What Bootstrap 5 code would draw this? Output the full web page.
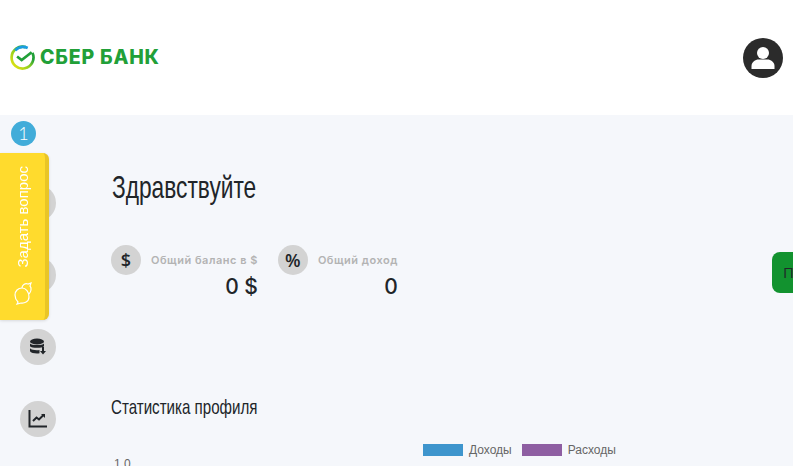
<!DOCTYPE html>
<html lang="ru">
<head>
    <meta charset="UTF-8">
    <meta name="viewport" content="width=device-width, initial-scale=1.0">
    <title>Сбер Банк</title>
    <link href="https://cdn.jsdelivr.net/npm/bootstrap@5.3.0/dist/css/bootstrap.min.css" rel="stylesheet">
    <style>
        html, body {
            height: 100%;
            overflow: hidden;
            background: #fff;
        }
        .top-bar {
            height: 115px;
            padding: 0 15px 0 10px;
        }
        .logo-text {
            font: 800 19.5px/1 Inter, "Liberation Sans", sans-serif;
            color: #21a038;
            letter-spacing: .8px;
            margin-left: 5px;
            white-space: nowrap;
        }
        .page-body {
            height: 351px;
            width: 793px;
            background: #f5f7fb;
            overflow: hidden;
        }
        .side-col {
            width: 111px;
            padding: 6px 0 0 11px;
        }
        .side-badge {
            width: 25px;
            height: 25px;
            border-radius: 50%;
            background: #41acd9;
            color: #fff;
            font: 300 18px/25px Lato, sans-serif;
            text-align: center;
        }
        .side-icons {
            margin: 39px 0 0 9px;
            gap: 36px;
        }
        .side-circle {
            width: 36px;
            height: 36px;
            border-radius: 50%;
            background: #d3d3d3;
        }
        .page-title {
            font: 400 32px/38px "Liberation Sans", sans-serif;
            color: #212529;
            margin: 53px 0 39px 1px;
            transform: scaleX(.71);
            transform-origin: left;
            white-space: nowrap;
        }
        .stat-row {
            gap: 20px;
        }
        .stat-circle {
            width: 30px;
            height: 30px;
            border-radius: 50%;
            background: #d3d3d3;
            color: #212529;
            font: 600 18px/30px "Open Sans", sans-serif;
            text-align: center;
            flex: none;
        }
        .stat-label {
            font: 600 11px/30px Inter, sans-serif;
            color: #b3b3b3;
            letter-spacing: .5px;
            margin-left: 10px;
            white-space: nowrap;
        }
        .stat-value {
            font: 500 21px/24px Inter, sans-serif;
            color: #212529;
            text-align: right;
        }
        .sub-title {
            font: 400 21px/25px "Liberation Sans", sans-serif;
            color: #212529;
            margin: 95px 0 0;
            transform: scaleX(.72);
            transform-origin: left;
            white-space: nowrap;
        }
        .legend-row {
            margin: 25px 0 0 312px;
            font: 12px/12px "Liberation Sans", sans-serif;
            color: #666;
        }
        .legend-swatch {
            width: 40px;
            height: 12px;
            margin-right: 6px;
        }
        .legend-name {
            margin-right: 10px;
        }
        .axis-tick {
            font: 12px/12px "Liberation Sans", sans-serif;
            color: #666;
            margin: 2px 0 0 3px;
        }
        .ask-tab {
            position: fixed;
            left: 0;
            top: 153px;
            width: 49px;
            height: 167px;
            background: #ffdb2d;
            border-right: 4px solid #e9c526;
            border-radius: 0 6px 6px 0;
            box-shadow: 0 1px 3px rgba(0, 0, 0, .12);
            color: #fff;
            padding: 13px 0 15px;
        }
        .ask-text {
            writing-mode: vertical-rl;
            transform: rotate(180deg);
            font: 400 15px/1 "Liberation Sans", sans-serif;
            white-space: nowrap;
        }
        .green-tab {
            position: fixed;
            left: 772px;
            top: 252px;
            width: 21px;
            height: 41px;
            background: #12922f;
            border-radius: 8px 0 0 8px;
            color: #212529;
            font: 400 15px/41px "Open Sans", sans-serif;
            padding-left: 11px;
            overflow: hidden;
        }
    </style>
</head>
<body>
    <header class="top-bar d-flex align-items-center justify-content-between">
        <div class="d-flex align-items-center">
            <svg width="25" height="25" viewBox="0 0 24 24" fill="none">
                <defs>
                    <linearGradient id="ring" x1="0" y1="1" x2="1" y2="0">
                        <stop offset="0" stop-color="#f4e50e"/>
                        <stop offset=".45" stop-color="#8fd01f"/>
                        <stop offset=".7" stop-color="#21a038"/>
                        <stop offset="1" stop-color="#21a038"/>
                    </linearGradient>
                </defs>
                <path d="M21.500 7.500A10.500 10.500 0 1 1 15 2" stroke="url(#ring)" stroke-width="2.600"/>
                <path d="M5 5.200A10.500 10.500 0 0 1 17 2.800" stroke="#1a9ee0" stroke-width="2.600"/>
                <path d="M6.800 11l4.400 3.400 9.600-7.400" stroke="#21a038" stroke-width="2.600"/>
            </svg>
            <span class="logo-text">СБЕР БАНК</span>
        </div>
        <svg width="40" height="40" viewBox="0 0 40 40">
            <circle cx="20" cy="20" r="20" fill="#2b2b2b"/>
            <circle cx="20" cy="15" r="6" fill="#fff"/>
            <path d="M8.500 31v-3c0-4 4-6.500 7-6.500h9c3 0 7 2.500 7 6.500v3z" fill="#fff"/>
        </svg>
    </header>

    <main class="page-body d-flex">
        <aside class="side-col flex-shrink-0">
            <div class="side-badge">1</div>
            <div class="side-icons d-flex flex-column">
                <div class="side-circle"></div>
                <div class="side-circle"></div>
                <div class="side-circle d-flex align-items-center justify-content-center">
                    <svg width="18" height="18" viewBox="0 0 18 18" fill="#212529">
                        <ellipse cx="8" cy="3.500" rx="7" ry="3"/>
                        <path d="M1 5.500c1.500 2 12.500 2 14 0v2.800c-1.500 2-12.500 2-14 0z"/>
                        <path d="M1 10.300c1.500 2 7.500 2.200 9.500 1.600v3.300c-3 .6-8.500 0-9.500-2z"/>
                        <path d="M13 9h2v4h2l-3 3.500-3-3.500h2z"/>
                    </svg>
                </div>
                <div class="side-circle d-flex align-items-center justify-content-center">
                    <svg width="20" height="20" viewBox="0 0 20 20" fill="none" stroke="#212529" stroke-width="2">
                        <path d="M1.500 1v16.500H19"/>
                        <path d="M5 12l3.500-3.500 2.500 2 5-5"/>
                        <path d="M13 5h4v4" fill="#212529" stroke="none"/>
                    </svg>
                </div>
            </div>
        </aside>

        <section class="flex-grow-1">
            <h1 class="page-title">Здравствуйте</h1>
            <div class="stat-row d-flex">
                <div>
                    <div class="d-flex">
                        <div class="stat-circle">$</div>
                        <div class="stat-label">Общий баланс в $</div>
                    </div>
                    <div class="stat-value">0 $</div>
                </div>
                <div>
                    <div class="d-flex">
                        <div class="stat-circle">%</div>
                        <div class="stat-label">Общий доход</div>
                    </div>
                    <div class="stat-value">0</div>
                </div>
            </div>
            <h2 class="sub-title">Статистика профиля</h2>
            <div class="legend-row d-flex align-items-center">
                <span class="legend-swatch" style="background:#3e95cd"></span>
                <span class="legend-name">Доходы</span>
                <span class="legend-swatch" style="background:#8e5ea2"></span>
                <span class="legend-name">Расходы</span>
            </div>
            <div class="axis-tick">1.0</div>
        </section>
    </main>

    <div class="ask-tab d-flex flex-column align-items-center justify-content-between">
        <span class="ask-text">Задать вопрос</span>
        <svg width="20" height="24" viewBox="0 0 20 24" fill="none" stroke="#fff" stroke-width="1.200">
            <path d="M9 7c-4 0-7 3-7 7s2 6 3 7l-1 2 4-1c3 .5 8-1 8-6 0-5-3-9-7-9z"/>
            <path d="M9 7c0-3 3-5 6-4l3-1-1 3c2 2 1 6-1 8"/>
        </svg>
    </div>
    <div class="green-tab">П</div>

    <script src="https://cdn.jsdelivr.net/npm/bootstrap@5.3.0/dist/js/bootstrap.bundle.min.js"></script>
</body>
</html>
